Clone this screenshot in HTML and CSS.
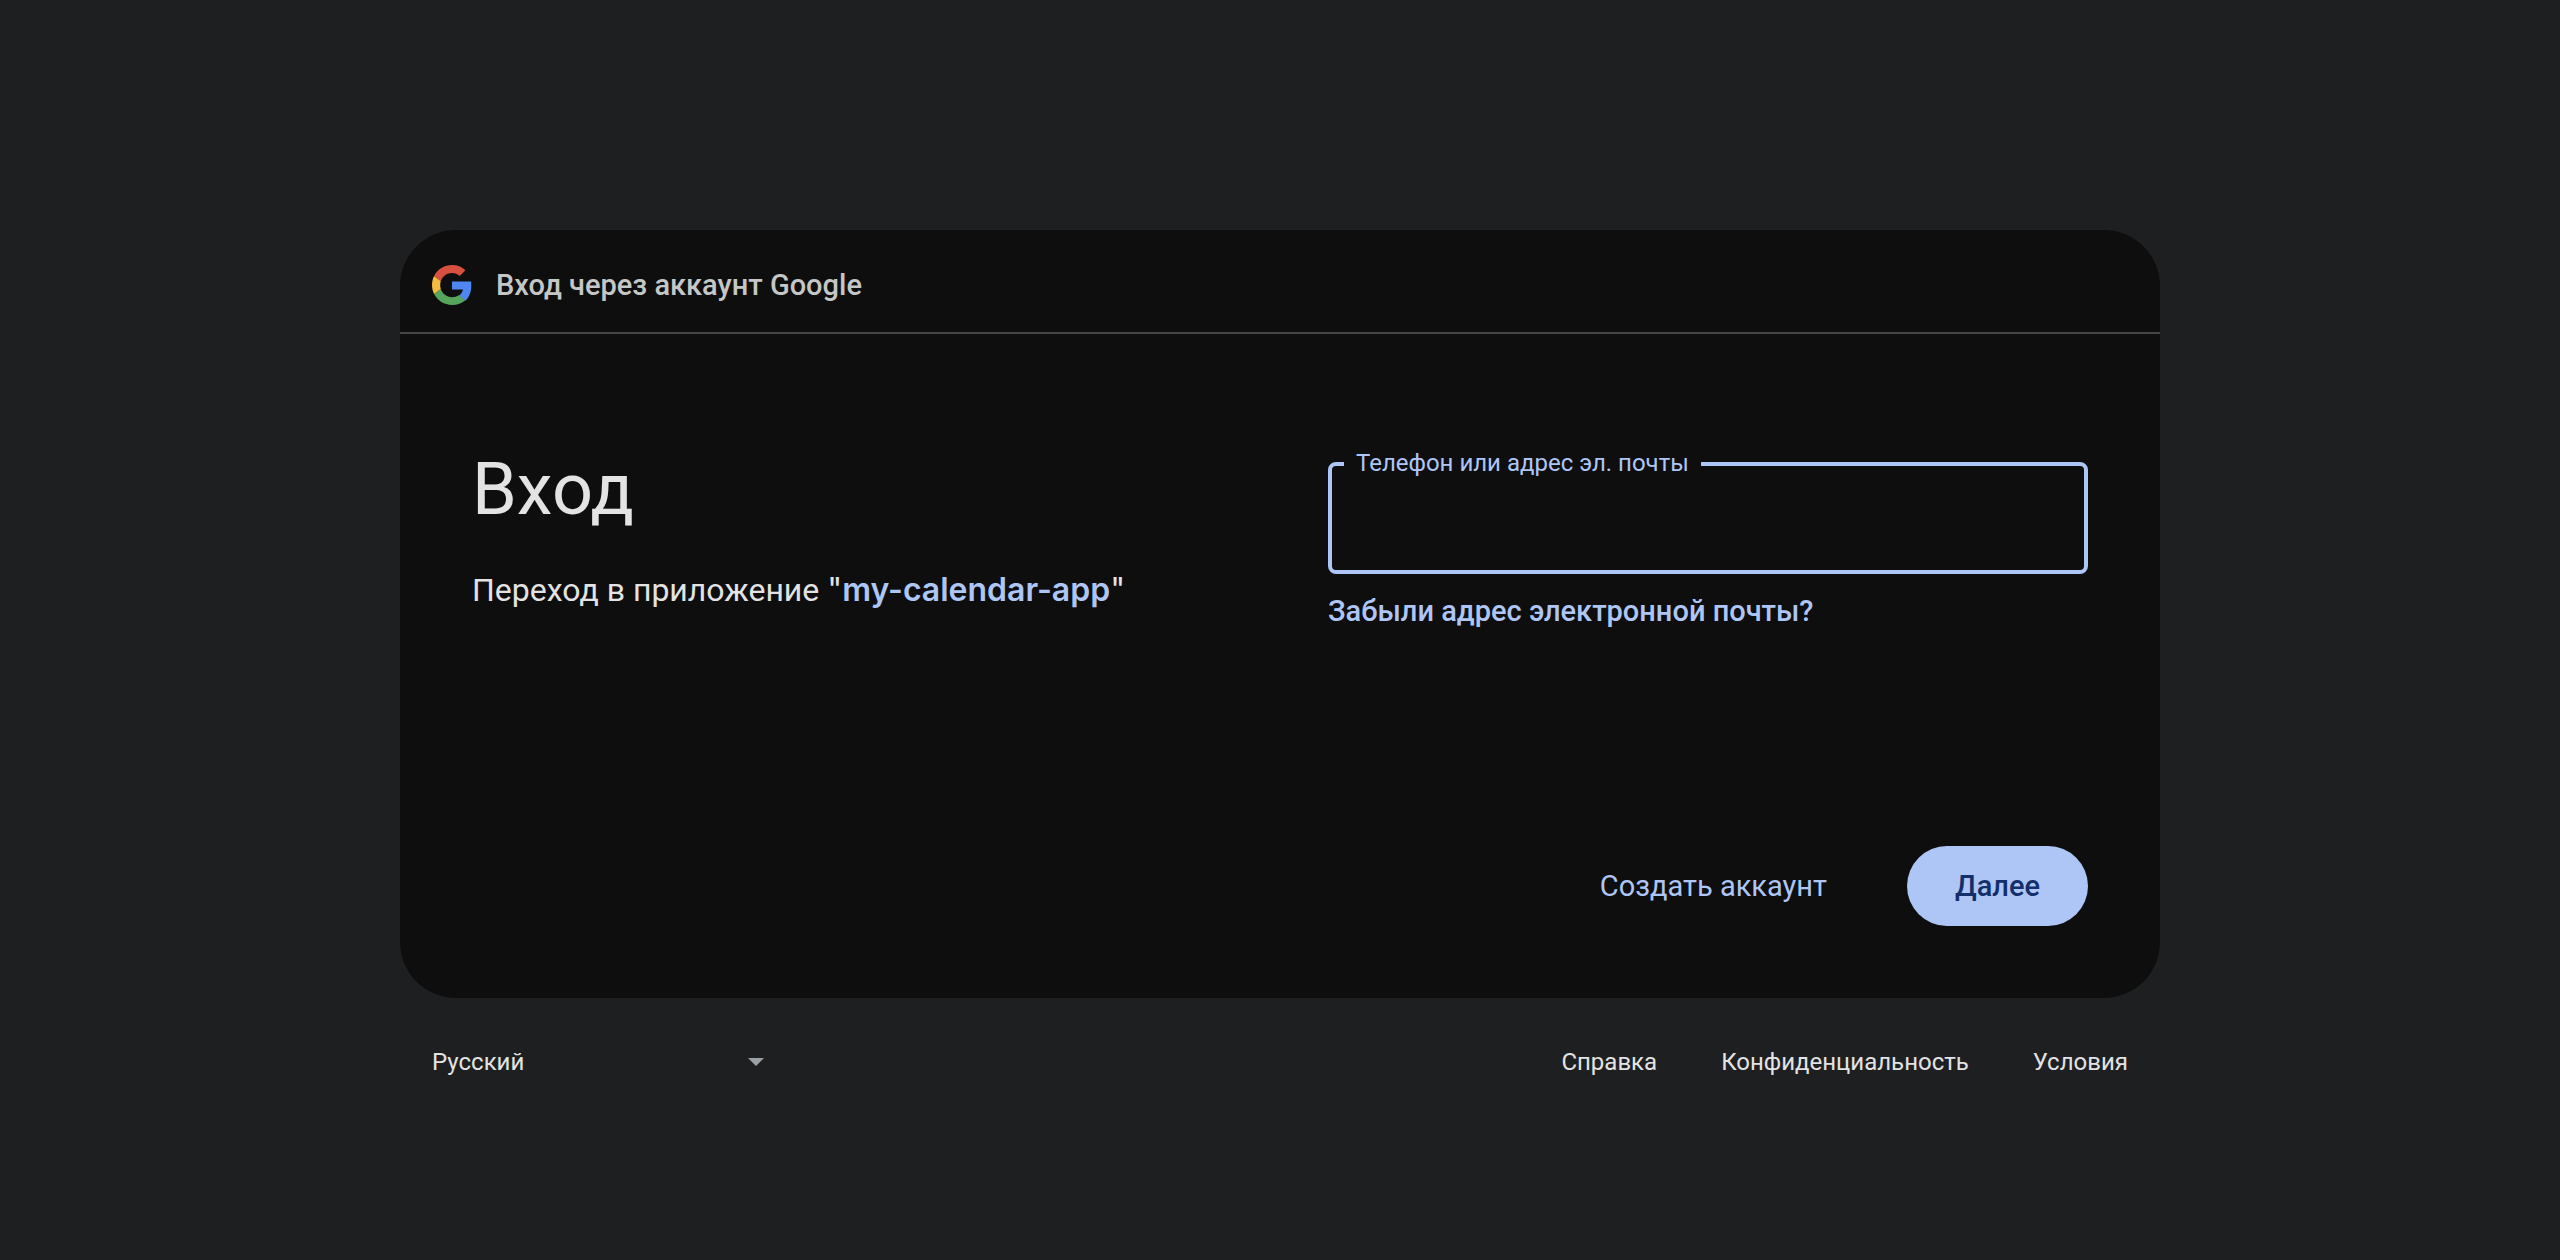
FILE: index.html
```html
<!DOCTYPE html>
<html lang="ru">
<head>
<meta charset="utf-8">
<meta name="viewport" content="width=device-width, initial-scale=1">
<title>Вход – Google Аккаунты</title>
<link rel="stylesheet" href="styles.css">
</head>
<body>
<div class="page">
  <main class="card">
    <header class="card-header">
      <svg class="logo" viewBox="0 0 40 40" aria-hidden="true">
        <path fill="#4f86ef" d="M39.2 16.4H20v8h11c-.5 2.600-2 4.800-4.200 6.300l6.500 5.100c3.800-3.500 6-8.700 6-14.900 0-1.600-.1-3-.1-4.500z"/>
        <path fill="#56a55c" d="M20 40c5.400 0 10-1.700 13.300-4.700l-6.500-5c-1.800 1.200-4.100 1.900-6.800 1.900-5.200 0-9.600-3.500-11.200-8.200L2.100 29.100C5.400 35.600 12.200 40 20 40z"/>
        <path fill="#f3bb41" d="M8.800 24C8.400 22.700 8.200 21.400 8.200 20s.2-2.700.6-4L2.100 10.900C.8 13.600 0 16.700 0 20s.8 6.400 2.100 9.100z"/>
        <path fill="#d85140" d="M20 7.900c2.900 0 5.600 1 7.700 3l5.700-5.700C29.900 1.900 25.400 0 20 0 12.200 0 5.400 4.400 2.100 10.900L8.800 16c1.600-4.700 6-8.100 11.200-8.100z"/>
      </svg>
      <span class="card-header-text">Вход через аккаунт Google</span>
    </header>
    <div class="card-body">
      <section class="intro">
        <h1 class="title">Вход</h1>
        <p class="subtitle">Переход в приложение <span class="app">"<a class="app-link" href="#">my-calendar-app</a>"</span></p>
      </section>
      <form class="form">
        <div class="field">
          <input class="field-input" id="identifier" type="email" autocomplete="username">
          <label class="field-label" for="identifier">Телефон или адрес эл. почты</label>
        </div>
        <a class="forgot" href="#">Забыли адрес электронной почты?</a>
        <div class="actions">
          <button class="btn btn-text" type="button">Создать аккаунт</button>
          <button class="btn btn-filled" type="submit">Далее</button>
        </div>
      </form>
    </div>
  </main>
  <footer class="footer">
    <div class="language">
      <select class="language-select" aria-label="Язык">
        <option>Русский</option>
      </select>
      <svg class="language-arrow" viewBox="0 0 16 8" aria-hidden="true"><path fill="#9aa0a6" d="M0 0h16L8 8z"/></svg>
    </div>
    <nav class="footer-links">
      <a href="#">Справка</a>
      <a href="#">Конфиденциальность</a>
      <a href="#">Условия</a>
    </nav>
  </footer>
</div>
</body>
</html>
```

FILE: styles.css
```css
*,
*::before,
*::after {
  box-sizing: border-box;
}

body {
  margin: 0;
  background: #1e1f20;
  color: #e3e3e3;
  font-family: Roboto, "Liberation Sans", sans-serif;
}

a {
  color: inherit;
  text-decoration: none;
}

.page {
  display: grid;
  grid-template-rows: 1fr auto 1fr;
  justify-content: center;
  grid-template-columns: minmax(0, 1760px);
  min-height: 100vh;
  padding: 0 48px 32px;
}

.card {
  grid-row: 2;
  display: flex;
  flex-direction: column;
  min-height: 768px;
  border-radius: 56px;
  background: #0e0e0e;
}

.card-header {
  display: flex;
  align-items: center;
  gap: 24px;
  padding: 35px 32px 27px;
  border-bottom: 2px solid #444746;
}

.logo {
  width: 40px;
  height: 40px;
}

.card-header-text {
  color: #c4c7c5;
  font-size: 29px;
  font-weight: 500;
  line-height: 40px;
}

.card-body {
  flex: 1;
  display: grid;
  grid-template-columns: 1fr 1fr;
  gap: 96px;
  padding: 112px 72px 72px;
}

.title {
  margin: 0;
  font-size: 72px;
  font-weight: 400;
  line-height: 88px;
}

.subtitle {
  margin: 32px 0 0;
  font-size: 32px;
  line-height: 48px;
}

.app {
  font-family: Inter, Roboto, sans-serif;
}

.app-link {
  color: #aec6f6;
  font-weight: 600;
}

.form {
  display: flex;
  flex-direction: column;
  align-items: flex-start;
  padding-top: 16px;
}

.field {
  position: relative;
  width: 100%;
}

.field-input {
  display: block;
  width: 100%;
  height: 112px;
  padding: 0 28px;
  border: 4px solid #aec6f6;
  border-radius: 8px;
  outline: none;
  background: transparent;
  color: #e3e3e3;
  font: 32px Roboto, "Liberation Sans", sans-serif;
}

.field-label {
  position: absolute;
  top: -15px;
  left: 16px;
  padding: 0 12px;
  background: #0e0e0e;
  color: #aec6f6;
  font-size: 24px;
  line-height: 32px;
}

.forgot {
  margin-top: 17px;
  color: #aec6f6;
  font-size: 29px;
  font-weight: 500;
  line-height: 40px;
}

.actions {
  display: flex;
  justify-content: flex-end;
  align-self: stretch;
  gap: 32px;
  margin-top: auto;
}

.btn {
  height: 80px;
  padding: 0 48px;
  border: 0;
  border-radius: 40px;
  font: 500 29px Roboto, "Liberation Sans", sans-serif;
  cursor: pointer;
}

.btn-text {
  background: transparent;
  color: #aec6f6;
  font-weight: 400;
}

.btn-filled {
  background: #aec6f6;
  color: #122e6b;
}

.footer {
  grid-row: 3;
  display: flex;
  align-items: flex-start;
  justify-content: space-between;
  padding: 32px 32px 0;
  font-size: 24px;
  line-height: 64px;
}

.language {
  position: relative;
}

.language-select {
  display: block;
  width: 348px;
  height: 64px;
  padding: 0;
  border: 0;
  appearance: none;
  background: transparent;
  color: #e3e3e3;
  font: 24px Roboto, "Liberation Sans", sans-serif;
}

.language-arrow {
  position: absolute;
  top: 28px;
  right: 16px;
  width: 16px;
  height: 8px;
  pointer-events: none;
}

.footer-links {
  display: flex;
  gap: 64px;
}
```
